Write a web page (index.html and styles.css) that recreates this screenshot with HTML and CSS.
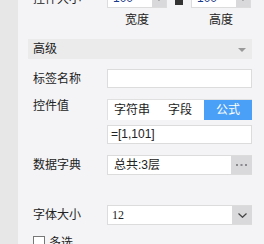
FILE: index.html
```html
<!DOCTYPE html>
<html lang="zh">
<head>
    <meta charset="UTF-8">
    <title>控件属性</title>
    <link rel="stylesheet" href="styles.css">
</head>
<body>
    <div class="shell">
        <div class="side"></div>
        <div class="panel">
            <div class="row size-row">
                <span class="label">控件大小</span>
                <div class="mini-select"><span class="val">100</span><span class="arrow"><svg width="8" height="5" viewBox="0 0 8 5"><path d="M0.5 0.5 L4 4 L7.5 0.5" fill="none" stroke="#555" stroke-width="1.2"/></svg></span></div>
                <span class="lock"></span>
                <div class="mini-select"><span class="val">100</span><span class="arrow"><svg width="8" height="5" viewBox="0 0 8 5"><path d="M0.5 0.5 L4 4 L7.5 0.5" fill="none" stroke="#555" stroke-width="1.2"/></svg></span></div>
            </div>
            <div class="sub-labels">
                <span>宽度</span>
                <span>高度</span>
            </div>

            <div class="section-head">
                <span>高级</span>
                <span class="caret"></span>
            </div>

            <div class="row gap-10">
                <span class="label">标签名称</span>
                <div class="field"></div>
            </div>

            <div class="row top gap-11">
                <span class="label">控件值</span>
                <div class="stack">
                    <div class="tabs">
                        <span class="tab">字符串</span>
                        <span class="tab">字段</span>
                        <span class="tab active">公式</span>
                    </div>
                    <div class="field text">=[1,101]</div>
                </div>
            </div>

            <div class="row gap-11">
                <span class="label">数据字典</span>
                <div class="field text with-btn">
                    <span class="grow">总共:3层</span>
                    <span class="more"><svg width="11" height="2" viewBox="0 0 11 2"><rect x="0" y="0" width="2" height="2" fill="#8a8a8e"/><rect x="4.5" y="0" width="2" height="2" fill="#8a8a8e"/><rect x="9" y="0" width="2" height="2" fill="#8a8a8e"/></svg></span>
                </div>
            </div>

            <div class="row gap-30">
                <span class="label">字体大小</span>
                <div class="field select">
                    <span class="grow serif">12</span>
                    <span class="arrow big"><svg width="9" height="5" viewBox="0 0 9 5"><path d="M0.5 0.5 L4.5 4.3 L8.5 0.5" fill="none" stroke="#444" stroke-width="1.2"/></svg></span>
                </div>
            </div>

            <label class="check">
                <span class="box"></span>
                <span>多选</span>
            </label>
        </div>
    </div>
</body>
</html>
```

FILE: styles.css
```css
html, body {
    margin: 0;
    padding: 0;
    height: 100%;
    overflow: hidden;
}
body {
    font-family: "Liberation Sans", "Noto Sans CJK SC", sans-serif;
    font-size: 12px;
    color: #222;
    background-color: #f4f4f6;
}
.shell {
    display: flex;
    height: 100%;
}
.side {
    width: 18px;
    flex: none;
    background-color: #e7e7e7;
}
.panel {
    flex: 1;
    padding: 0 12px 0 10px;
    margin-top: -11px;
}
.row {
    display: flex;
    align-items: center;
    padding-left: 5px;
}
.row.top {
    align-items: flex-start;
}
.gap-10 { margin-top: 10px; }
.gap-11 { margin-top: 11px; }
.gap-30 { margin-top: 30px; }
.label {
    width: 74px;
    flex: none;
    line-height: 14px;
}
.size-row {
    height: 19px;
}
.mini-select {
    width: 60px;
    height: 19px;
    box-sizing: border-box;
    display: flex;
    background-color: #fff;
    border: 1px solid #dcdcdc;
}
.mini-select .val {
    flex: 1;
    padding-left: 5px;
    line-height: 17px;
    color: #1a3a8a;
}
.arrow {
    width: 14px;
    display: flex;
    align-items: center;
    justify-content: center;
    background-color: #d9d9dc;
}
.lock {
    width: 8px;
    height: 7px;
    margin: 0 8px 0 8px;
    background-color: #333;
    align-self: flex-end;
    margin-bottom: 3px;
}
.sub-labels {
    display: flex;
    margin-top: 4px;
    padding-left: 79px;
    line-height: 17px;
}
.sub-labels span {
    width: 60px;
    text-align: center;
}
.sub-labels span + span {
    margin-left: 24px;
}
.section-head {
    margin-top: 10px;
    height: 20px;
    line-height: 20px;
    padding: 0 6px 0 5px;
    background-color: #ebebeb;
    display: flex;
    justify-content: space-between;
    align-items: center;
}
.caret {
    width: 0;
    height: 0;
    border-left: 4px solid transparent;
    border-right: 4px solid transparent;
    border-top: 4px solid #999;
    margin-top: 2px;
}
.field {
    flex: 1;
    height: 19px;
    box-sizing: border-box;
    background-color: #fff;
    border: 1px solid #dcdcdc;
}
.field.text {
    padding-left: 3px;
    line-height: 17px;
    color: #222;
}
.stack {
    flex: 1;
    display: flex;
    flex-direction: column;
    gap: 5px;
}
.tabs {
    display: flex;
    height: 21px;
    box-sizing: border-box;
    background-color: #fff;
    border: 1px solid #e0e0e0;
    border-right: none;
    border-bottom: none;
}
.tab {
    flex: 1;
    text-align: center;
    line-height: 20px;
}
.tab.active {
    background-color: #4a9ff6;
    color: #fff;
}
.with-btn, .select {
    display: flex;
    height: 20px;
    padding-left: 0;
    border-right: none;
}
.with-btn .grow {
    padding-left: 3px;
}
.grow {
    flex: 1;
    line-height: 18px;
}
.more {
    width: 21px;
    display: flex;
    align-items: center;
    justify-content: center;
    background-color: #d9d9dc;
}
.select .serif {
    font-family: "Liberation Serif", serif;
    padding-left: 4px;
}
.arrow.big {
    width: 20px;
}
.check {
    display: flex;
    align-items: flex-start;
    margin-top: 11px;
    padding-left: 5px;
    line-height: 14px;
}
.check .box {
    width: 10px;
    height: 10px;
    border: 1px solid #777;
    background-color: #fff;
    margin-right: 4px;
}
```
